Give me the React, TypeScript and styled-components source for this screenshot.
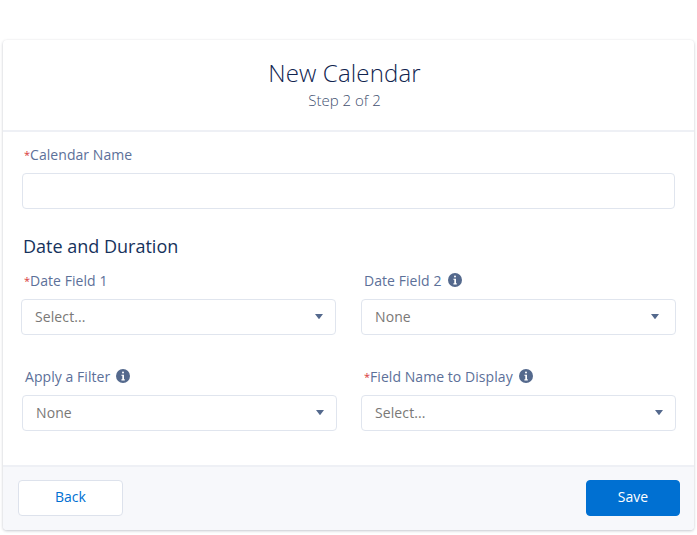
import styled, { createGlobalStyle } from 'styled-components';

const GlobalStyle = createGlobalStyle`
  html, body {
    margin: 0;
    padding: 0;
    background: #ffffff;
    font-family: "Open Sans", "Liberation Sans", sans-serif;
  }
`;

const Page = styled.div`
  width: 697px;
  height: 535px;
  padding: 40px 3px 5px;
  box-sizing: border-box;
  overflow: hidden;
`;

const Card = styled.div`
  width: 691px;
  height: 490px;
  display: flex;
  flex-direction: column;
  background: #fff;
  border-radius: 4px;
  box-shadow: 0 1px 3px rgba(20, 30, 60, 0.24), 0 0 2px rgba(20, 30, 60, 0.03);
`;

const Header = styled.header`
  height: 92px;
  flex: none;
  box-sizing: border-box;
  border-bottom: 2px solid #eef0f5;
  text-align: center;
  padding: 18px 8px 0 0;
`;

const Title = styled.h1`
  margin: 0;
  font-size: 24px;
  line-height: 30px;
  font-weight: 300;
  letter-spacing: 0.15px;
  color: #10244f;
`;

const Subtitle = styled.div`
  margin-top: 2px;
  font-size: 15px;
  line-height: 20px;
  font-weight: 300;
  color: #3f5070;
`;

const Body = styled.div`
  flex: 1;
  padding: 12px 19px 0 18px;
`;

const Label = styled.div`
  display: flex;
  align-items: center;
  height: 20px;
  margin-bottom: 9px;
  padding-left: 3px;
  font-size: 14px;
  letter-spacing: 0.06px;
  color: #5c7099;
`;

const Required = styled.span`
  color: #d8393a;
  font-size: 11px;
  width: 6px;
`;

const InfoIcon = styled.svg`
  width: 14px;
  height: 14px;
  margin-left: 6px;
  flex: none;
`;

const TextInput = styled.div`
  height: 36px;
  box-sizing: border-box;
  margin-left: 1px;
  background: #fff;
  border: 1px solid #e0e5ee;
  border-radius: 4px;
`;

const SectionTitle = styled.h2`
  margin: 25px 0 12px 2px;
  font-size: 18px;
  line-height: 24px;
  font-weight: 400;
  color: #16325c;
`;

const FieldGrid = styled.div`
  display: grid;
  grid-template-columns: 316px 315px;
  column-gap: 24px;
  row-gap: 31px;
`;

const Field = styled.div<{ $left?: number; $right?: number }>`
  padding-left: ${(p) => p.$left ?? 0}px;
  padding-right: ${(p) => p.$right ?? 0}px;
`;

const Select = styled.div<{ $arrowGap: number }>`
  height: 36px;
  box-sizing: border-box;
  display: flex;
  align-items: center;
  justify-content: space-between;
  padding: 0 ${(p) => p.$arrowGap}px 1px 13px;
  background: #fff;
  border: 1px solid #e0e5ee;
  border-radius: 4px;
  font-size: 14px;
  letter-spacing: 0.1px;
  color: #7a7876;
`;

const Caret = styled.svg`
  width: 8px;
  height: 5px;
  flex: none;
`;

const Footer = styled.footer`
  height: 65px;
  flex: none;
  box-sizing: border-box;
  display: flex;
  align-items: center;
  justify-content: space-between;
  padding: 0 14px 2px 15px;
  background: #f7f8fb;
  border-top: 2px solid #eef0f5;
  border-radius: 0 0 4px 4px;
`;

const Button = styled.button<{ $primary?: boolean }>`
  height: 36px;
  width: ${(p) => (p.$primary ? 94 : 105)}px;
  padding: 0 0 2px;
  box-sizing: border-box;
  border-radius: 4px;
  border: 1px solid ${(p) => (p.$primary ? '#0070d2' : '#dde2ec')};
  background: ${(p) => (p.$primary ? '#0070d2' : '#fff')};
  color: ${(p) => (p.$primary ? '#fff' : '#0070d2')};
  font-family: inherit;
  font-size: 14px;
`;

function Info() {
  return (
    <InfoIcon viewBox="0 0 14 14">
      <circle cx="7" cy="7" r="7" fill="#54698d" />
      <rect x="6" y="2.6" width="2" height="2" rx="1" fill="#fff" />
      <path d="M5.4 5.7H8v4.6h.8v1.1H5.4v-1.1h.9V6.8h-.9z" fill="#fff" />
    </InfoIcon>
  );
}

function Arrow() {
  return (
    <Caret viewBox="0 0 8 5">
      <path d="M0 0h8L4.4 4.7a.5.5 0 0 1-.8 0z" fill="#54698d" />
    </Caret>
  );
}

export default function App() {
  return (
    <>
      <GlobalStyle />
      <Page>
        <Card>
          <Header>
            <Title>New Calendar</Title>
            <Subtitle>Step 2 of 2</Subtitle>
          </Header>
          <Body>
            <Label>
              <Required>*</Required>Calendar Name
            </Label>
            <TextInput />
            <SectionTitle>Date and Duration</SectionTitle>
            <FieldGrid>
              <Field $right={1}>
                <Label>
                  <Required>*</Required>Date Field 1
                </Label>
                <Select $arrowGap={12}>
                  Select...
                  <Arrow />
                </Select>
              </Field>
              <Field>
                <Label>
                  Date Field 2
                  <Info />
                </Label>
                <Select $arrowGap={16}>
                  None
                  <Arrow />
                </Select>
              </Field>
              <Field $left={1}>
                <Label>
                  Apply a Filter
                  <Info />
                </Label>
                <Select $arrowGap={12}>
                  None
                  <Arrow />
                </Select>
              </Field>
              <Field>
                <Label>
                  <Required>*</Required>Field Name to Display
                  <Info />
                </Label>
                <Select $arrowGap={12}>
                  Select...
                  <Arrow />
                </Select>
              </Field>
            </FieldGrid>
          </Body>
          <Footer>
            <Button>Back</Button>
            <Button $primary>Save</Button>
          </Footer>
        </Card>
      </Page>
    </>
  );
}
